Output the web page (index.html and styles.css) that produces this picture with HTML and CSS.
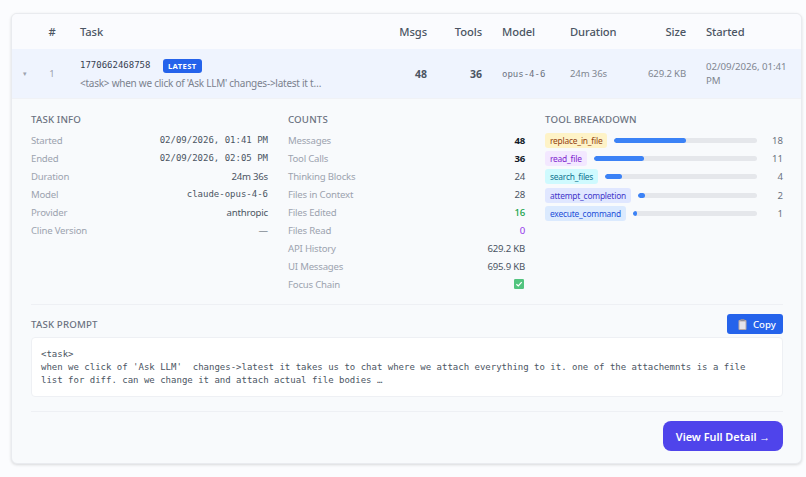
FILE: index.html
```html
<!DOCTYPE html>
<html lang="en">
<head>
<meta charset="utf-8">
<title>Tasks</title>
<link rel="stylesheet" href="styles.css">
</head>
<body>
<main class="card">
  <div class="grid head">
    <div></div>
    <div class="center idx-cell">#</div>
    <div>Task</div>
    <div class="right">Msgs</div>
    <div class="right">Tools</div>
    <div>Model</div>
    <div>Duration</div>
    <div class="right">Size</div>
    <div>Started</div>
  </div>
  <div class="grid row">
    <div class="center caret">▾</div>
    <div class="center idx idx-cell">1</div>
    <div class="task">
      <div class="task-top"><span class="mono id">1770662468758</span><span class="badge">LATEST</span></div>
      <div class="preview">&lt;task&gt; when we click of 'Ask LLM' changes-&gt;latest it t…</div>
    </div>
    <div class="right num">48</div>
    <div class="right num">36</div>
    <div class="mono model">opus-4-6</div>
    <div class="dim">24m 36s</div>
    <div class="right dim">629.2 KB</div>
    <div class="dim started">02/09/2026, 01:41 PM</div>
  </div>
  <div class="detail">
    <div class="cols">
      <section>
        <h3>Task Info</h3>
        <div class="kv"><span>Started</span><b class="mono">02/09/2026, 01:41 PM</b></div>
        <div class="kv"><span>Ended</span><b class="mono">02/09/2026, 02:05 PM</b></div>
        <div class="kv"><span>Duration</span><b>24m 36s</b></div>
        <div class="kv"><span>Model</span><b class="mono">claude-opus-4-6</b></div>
        <div class="kv"><span>Provider</span><b>anthropic</b></div>
        <div class="kv"><span>Cline Version</span><b>—</b></div>
      </section>
      <section>
        <h3>Counts</h3>
        <div class="kv"><span>Messages</span><b class="strong">48</b></div>
        <div class="kv"><span>Tool Calls</span><b class="strong">36</b></div>
        <div class="kv"><span>Thinking Blocks</span><b>24</b></div>
        <div class="kv"><span>Files in Context</span><b>28</b></div>
        <div class="kv"><span>Files Edited</span><b class="green">16</b></div>
        <div class="kv"><span>Files Read</span><b class="purple">0</b></div>
        <div class="kv"><span>API History</span><b>629.2 KB</b></div>
        <div class="kv"><span>UI Messages</span><b>695.9 KB</b></div>
        <div class="kv"><span>Focus Chain</span>
          <svg class="check" viewBox="0 0 10 10" aria-label="yes"><rect width="10" height="10" rx="1.2" fill="#52c47f"/><path d="M2.4 5.2 4.3 7 7.7 3.2" fill="none" stroke="#fff" stroke-width="1.2"/></svg>
        </div>
      </section>
      <section>
        <h3>Tool Breakdown</h3>
        <div class="tool"><span class="tag amber">replace_in_file</span><div class="track"><div class="fill" style="width:50%"></div></div><span class="count">18</span></div>
        <div class="tool"><span class="tag violet">read_file</span><div class="track"><div class="fill" style="width:31%"></div></div><span class="count">11</span></div>
        <div class="tool"><span class="tag cyan">search_files</span><div class="track"><div class="fill" style="width:11%"></div></div><span class="count">4</span></div>
        <div class="tool"><span class="tag indigo">attempt_completion</span><div class="track"><div class="fill" style="width:6%"></div></div><span class="count">2</span></div>
        <div class="tool"><span class="tag blue">execute_command</span><div class="track"><div class="fill" style="width:3%"></div></div><span class="count">1</span></div>
      </section>
    </div>
    <div class="prompt-head">
      <h3>Task Prompt</h3>
      <button class="copy" type="button"><svg class="clip" viewBox="0 0 9 11"><rect x=".5" y="1" width="8" height="10" rx="1" fill="#b9a9a6"/><rect x="1.5" y="2.5" width="6" height="7.5" fill="#e6e3ea"/><rect x="2.5" y="0" width="4" height="2" rx=".5" fill="#8d8d9c"/></svg>Copy</button>
    </div>
    <pre class="prompt">&lt;task&gt;
when we click of 'Ask LLM'  changes-&gt;latest it takes us to chat where we attach everything to it. one of the attachemnts is a file list for diff. can we change it and attach actual file bodies …</pre>
    <div class="foot"><button class="view" type="button">View Full Detail →</button></div>
  </div>
</main>
</body>
</html>
```
FILE: styles.css
```css
* { box-sizing: border-box; }
html, body { margin: 0; height: 100%; }
body {
  background: #fbfcfe;
  padding: 13px 4px 0 11px;
  font-family: "Noto Sans", sans-serif;
  font-size: 9.6px;
  color: #374151;
  overflow: hidden;
}
.card {
  height: 451px;
  background: #f8fafc;
  border: 1px solid #e9ebef;
  border-radius: 6px;
  box-shadow: 0 1px 3px rgba(0, 0, 0, .14);
  overflow: hidden;
}
.mono { font-family: "DejaVu Sans Mono", monospace; font-size: 9px; font-weight: 400; letter-spacing: 0; }
.grid {
  display: grid;
  grid-template-columns: 26px 32px 318px 49px 55px 68px 64px 72px 1fr;
  align-items: center;
}
.grid > div { padding: 0 10px; min-width: 0; }
.grid > .center { padding: 0; text-align: center; }
.grid > .idx-cell { padding-right: 4px; }
.right { text-align: right; }
.head {
  height: 35px;
  background: #fafbfe;
  font-size: 11.2px;
  letter-spacing: -.1px;
  font-weight: 500;
  color: #4b5563;
}
.row {
  height: 50px;
  background: #eff4fe;
  color: #6b7280;
  border-bottom: 1px solid #f0f2f6;
}
.caret { font-size: 7px; color: #9ca3af; }
.idx { font-size: 9.5px; color: #9ca3af; }
.task-top { display: flex; align-items: center; gap: 12.5px; height: 15px; }
.id { color: #374151; }
.badge {
  margin-top: 1px;
  background: #2563eb;
  color: #fff;
  font-size: 7.6px;
  font-weight: 700;
  letter-spacing: .4px;
  line-height: 14px;
  padding: 0 5px;
  border-radius: 3px;
}
.preview { font-size: 10px; letter-spacing: -.25px; line-height: 14px; margin-top: 3px; color: #7b828e; white-space: nowrap; }
.num { font-size: 10.5px; font-weight: 700; color: #4b5563; }
.model { color: #6b7280; }
.dim { font-size: 9.6px; letter-spacing: -.15px; color: #7f8691; }
.started { font-size: 9.7px; letter-spacing: -.05px; line-height: 14px; padding-right: 4px !important; }
.detail { padding: 14px 18px 0 19px; }
.cols { display: grid; grid-template-columns: 237px 237px 1fr; gap: 20px; padding-bottom: 11px; border-bottom: 1px solid #eef0f4; }
h3 {
  margin: 0 0 4px;
  font-size: 9.7px;
  line-height: 14px;
  font-weight: 500;
  letter-spacing: .15px;
  color: #6b7280;
  text-transform: uppercase;
}
.kv { display: flex; justify-content: space-between; align-items: center; height: 18px; font-size: 9.6px; letter-spacing: -.2px; color: #9ca3af; }
.kv b { font-weight: 400; color: #4b5563; font-size: 9.6px; }
.kv b.mono { font-size: 9px; letter-spacing: 0; }
.kv b.strong { font-weight: 700; color: #111827; }
.kv b.green { color: #16a34a; font-weight: 500; }
.kv b.purple { color: #9333ea; }
.check { width: 10px; height: 10px; margin-right: 1px; }
.tool { display: flex; align-items: center; height: 18.3px; }
.tag {
  font-size: 8.4px;
  letter-spacing: -.2px;
  line-height: 15px;
  padding: 0 5px;
  border-radius: 3px;
  white-space: nowrap;
  flex: none;
}
.amber { background: #fef3c7; color: #92400e; }
.violet { background: #f3e8ff; color: #7e22ce; }
.cyan { background: #cffafe; color: #0e7490; }
.indigo { background: #e0e7ff; color: #4338ca; }
.blue { background: #dbeafe; color: #1d4ed8; }
.track { flex: 1; height: 5px; margin-left: 7px; background: #e5e7eb; border-radius: 3px; overflow: hidden; }
.fill { height: 100%; background: #3b82f6; border-radius: 3px; min-width: 4px; }
.count { width: 26px; text-align: right; font-size: 9.6px; color: #6b7280; flex: none; }
.prompt-head { display: flex; justify-content: space-between; align-items: center; height: 20px; margin-top: 9px; }
.prompt-head h3 { margin: 2px 0 0; }
.copy {
  display: flex;
  align-items: center;
  gap: 6px;
  width: 56px;
  height: 20px;
  padding: 0 0 0 11px;
  border: 0;
  border-radius: 3px;
  background: #2563eb;
  color: #fff;
  font: 500 9.6px "Noto Sans", sans-serif;
}
.clip { width: 9px; height: 11px; }
.prompt {
  height: 60px;
  margin: 3px 0 14px;
  padding: 10px 14px 10px 9px;
  background: #fff;
  border: 1px solid #eef0f4;
  border-radius: 4px;
  font: 9px/13px "DejaVu Sans Mono", monospace;
  color: #4b5563;
  white-space: pre-wrap;
}
.foot { display: flex; justify-content: flex-end; padding-top: 9px; border-top: 1px solid #eef0f4; }
.view {
  width: 120px;
  height: 30px;
  padding: 0;
  border: 0;
  border-radius: 8px;
  background: #4f44eb;
  color: #fff;
  font: 600 10.85px "Noto Sans", sans-serif;
}
```
